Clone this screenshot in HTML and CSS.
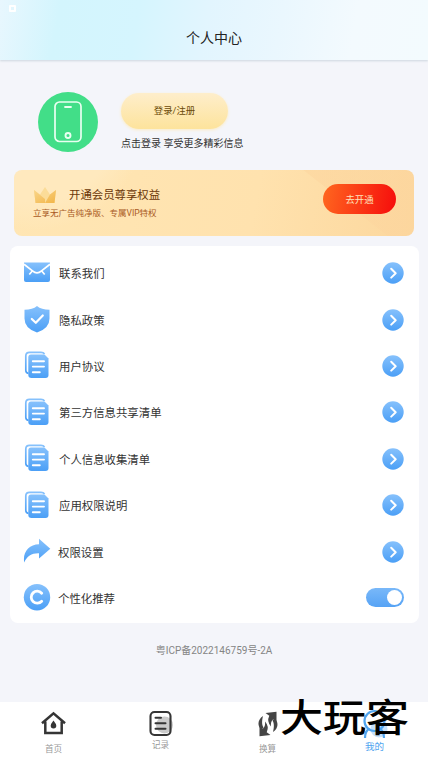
FILE: index.html
```html
<!DOCTYPE html>
<html lang="zh-CN">
<head>
<meta charset="utf-8">
<title>个人中心</title>
<link rel="stylesheet" href="styles.css">
</head>
<body>
<svg class="defs" width="0" height="0" aria-hidden="true">
  <defs>
    <linearGradient id="blue" x1="0" y1="0" x2="0" y2="1"><stop offset="0" stop-color="#86c1fc"/><stop offset="1" stop-color="#4b9ff6"/></linearGradient>
    <linearGradient id="gold" x1="0" y1="0" x2="1" y2="1"><stop offset="0" stop-color="#f9d58a"/><stop offset="1" stop-color="#f2b548"/></linearGradient>
    <symbol id="doc" viewBox="0 0 26 28">
      <path d="M4.500 22.500C2.600 22 1.800 21 1.800 19.500V5Q1.800 1.300 5.500 1.300H17Q19.500 1.300 20.500 3" fill="none" stroke="url(#blue)" stroke-width="1.700"/>
      <path d="M7 3.500H20.500L24.500 7.500V24Q24.500 27 21.500 27H7.500Q4.300 27 4.300 24V6.500Q4.300 3.500 7 3.500Z" fill="url(#blue)"/>
      <path d="M8.800 10.200H20M8.800 15.600H20M8.800 21.200H15.800" stroke="#fff" stroke-width="1.900" stroke-linecap="round"/>
    </symbol>
    <symbol id="go" viewBox="0 0 22 22">
      <circle cx="11" cy="11" r="10.700" fill="url(#blue)"/>
      <path d="M9.200 6.800L13.700 11.200L9.200 15.600" fill="none" stroke="#fff" stroke-width="2" stroke-linecap="round" stroke-linejoin="round"/>
    </symbol>
  </defs>
</svg>
<div class="app">
  <header class="header">
    <i class="status"></i>
    <h1>个人中心</h1>
  </header>
  <main class="main">
    <section class="profile">
      <div class="avatar">
        <svg width="28" height="42" viewBox="0 0 28 42" fill="none" stroke="#e9fff1">
          <rect x="1" y="1" width="26" height="39.500" rx="4.500" stroke-width="1.700"/>
          <path d="M11 6H17" stroke-width="1.800" stroke-linecap="round"/>
          <circle cx="14" cy="34.500" r="2.500" stroke-width="1.900"/>
        </svg>
      </div>
      <div class="login">
        <button class="login-btn">登录/注册</button>
        <p>点击登录 享受更多精彩信息</p>
      </div>
    </section>
    <section class="vip">
      <div class="vip-text">
        <div class="vip-title">
          <svg width="24" height="18" viewBox="0 0 24 18">
            <path d="M1 4L7 8.500L12 1L17 8.500L23 4L21.500 17H2.500Z" fill="#fbdc98"/>
            <path d="M1 4L12 13L12 17H2.500ZM17 8.500L23 4L21.500 17H12Z" fill="url(#gold)"/>
          </svg>
          <span>开通会员尊享权益</span>
        </div>
        <p>立享无广告纯净版、专属VIP特权</p>
      </div>
      <button class="vip-btn">去开通</button>
    </section>
    <ul class="menu">
      <li>
        <svg class="ico" viewBox="0 0 28 28"><path d="M1 3.500H27V21Q27 23 25 23H3Q1 23 1 21Z" fill="url(#blue)"/><path d="M1 5.300L9.500 11.800Q14 16 18.500 11.800L27 5.300M9.500 11.800L6.300 15.500M18.500 11.800L21.700 15.500" fill="none" stroke="#fff" stroke-width="1.700"/></svg>
        <span>联系我们</span><svg class="go"><use href="#go"/></svg>
      </li>
      <li>
        <svg class="ico" viewBox="0 0 28 28"><path d="M14 0C17 2.500 21 3.700 26.500 3.800V12.500Q26.500 22.500 14 26.500Q1.500 22.500 1.500 12.500V3.800C7 3.700 11 2.500 14 0Z" fill="url(#blue)"/><path d="M8.800 13L12.800 16.800L19.800 9.500" fill="none" stroke="#fff" stroke-width="2.200" stroke-linecap="round" stroke-linejoin="round"/></svg>
        <span>隐私政策</span><svg class="go"><use href="#go"/></svg>
      </li>
      <li><svg class="ico doc"><use href="#doc"/></svg><span>用户协议</span><svg class="go"><use href="#go"/></svg></li>
      <li><svg class="ico doc"><use href="#doc"/></svg><span>第三方信息共享清单</span><svg class="go"><use href="#go"/></svg></li>
      <li><svg class="ico doc"><use href="#doc"/></svg><span>个人信息收集清单</span><svg class="go"><use href="#go"/></svg></li>
      <li><svg class="ico doc"><use href="#doc"/></svg><span>应用权限说明</span><svg class="go"><use href="#go"/></svg></li>
      <li class="tight">
        <svg class="ico" viewBox="0 0 28 28"><path d="M16 .8L27.300 10.800L16 20.500V15.300C9 15 4 18 1.200 24.500C-.5 14 6 6.500 16 6.300Z" fill="url(#blue)"/></svg>
        <span>权限设置</span><svg class="go"><use href="#go"/></svg>
      </li>
      <li class="tight">
        <svg class="ico" viewBox="0 0 28 28"><circle cx="14" cy="13.200" r="13.200" fill="url(#blue)"/><path d="M18.700 9.200A6 6 0 1 0 18.700 17.200" fill="none" stroke="#fff" stroke-width="2.800" stroke-linecap="round"/></svg>
        <span>个性化推荐</span><i class="switch"></i>
      </li>
    </ul>
    <p class="record">粤ICP备2022146759号-2A</p>
  </main>
  <nav class="tabs">
    <a>
      <svg width="28" height="28" viewBox="0 0 28 28"><path d="M2 14.300L13.500 4.300L25 14.300M5.300 12.500V24H21.700V12.500" fill="none" stroke="#353535" stroke-width="2.500"/><path d="M13.500 11.500Q16.300 15 16.300 16.700A2.800 2.800 0 0 1 10.700 16.700Q10.700 15 13.500 11.500Z" fill="#353535"/></svg>
      <span>首页</span>
    </a>
    <a class="records">
      <svg width="28" height="28" viewBox="0 0 28 28"><circle cx="17.500" cy="16" r="8.500" fill="#cbcbcb"/><rect x="3.500" y="3" width="20" height="23" rx="4" fill="none" stroke="#353535" stroke-width="2.100"/><path d="M8.500 8.800H14M8.500 14.300H18.500M8.500 19.800H18.500" stroke="#353535" stroke-width="2" stroke-linecap="round"/></svg>
      <span>记录</span>
    </a>
    <a>
      <svg width="28" height="28" viewBox="0 0 28 28" fill="#454545">
        <path id="turn" d="M11.500 4L22.500 2.700V13L19.300 10.300Q16.300 12.500 17 17.500Q12.500 12.500 15.300 6.800Z"/>
        <path id="side" d="M9 7C3 11 3.500 17.500 7.500 20.500L9.500 18.500C7.500 15.500 8 11 9 7Z"/>
        <use href="#turn" transform="rotate(180 14 15)"/>
        <use href="#side" transform="rotate(180 14 15)"/>
      </svg>
      <span>换算</span>
    </a>
    <a class="active">
      <svg width="30" height="30" viewBox="0 0 30 30"><circle cx="19" cy="20" r="8.500" fill="#c5e0fb"/><circle cx="14.500" cy="12" r="10" fill="none" stroke="#50a4ef" stroke-width="2.200"/><path d="M5 29Q5 22 9.500 19.500M24 29Q24 22 19.500 19.500" fill="none" stroke="#50a4ef" stroke-width="2.200"/></svg>
      <span>我的</span>
    </a>
  </nav>
  <div class="brand">大玩客</div>
</div>
</body>
</html>
```

FILE: styles.css
```css
* { box-sizing: border-box; margin: 0; padding: 0; }
body { font-family: Roboto, "Noto Sans CJK SC", sans-serif; background: #f4f5fa; color: #333; }
.defs { position: absolute; }
.app { position: relative; display: flex; flex-direction: column; width: 428px; height: 760px; overflow: hidden; }
.header {
  position: relative;
  height: 60px;
  padding-top: 28px;
  background: linear-gradient(100deg, #e8f7fe 0, #d3f5fd 14%, #d5f5fe 32%, #e2f5fe 48%, #eaf7fe 65%, #f3fafe 82%, #f3fbfe 100%);
  box-shadow: 0 1px 2px #cdd6df;
}
.header h1 { font-size: 14px; line-height: 21px; font-weight: 400; text-align: center; color: #222; }
.status { position: absolute; left: 9px; top: 5px; width: 7px; height: 7px; border: 2px solid #fff; border-radius: 1px; }
.main { flex: 1; }
.profile { display: flex; gap: 23px; padding: 32px 0 0 38px; height: 110px; }
.avatar { display: flex; align-items: center; justify-content: center; width: 60px; height: 60px; border-radius: 50%; background: #42de88; }
.login-btn {
  display: block; width: 107px; height: 36px; margin-top: 1px; border: 0; border-radius: 18px;
  background: linear-gradient(#feeecb, #fde39c); box-shadow: 0 1px 3px #fcecc4;
  font: 9.4px/36px Roboto, "Noto Sans CJK SC", sans-serif; color: #6b4a08;
}
.login p { margin-top: 7px; font-size: 10px; line-height: 15px; white-space: nowrap; }
.vip {
  display: flex; justify-content: space-between; height: 66px; margin: 0 14px; padding: 14px 18px 0 19px; border-radius: 8px;
  background:
    linear-gradient(38deg, transparent 77%, #fcd59e88 77.3%),
    radial-gradient(circle at 22px -50px, #ffe9be 0 82px, transparent 110px),
    linear-gradient(100deg, #ffe6b4, #ffe2ae 60%, #fcd79d);
}
.vip-title { display: flex; align-items: center; gap: 12px; height: 22px; font-size: 11.4px; color: #6b3708; }
.vip-title span { padding-bottom: 3px; }
.vip-title svg { margin-top: -1px; }
.vip-text p { font-size: 8.5px; line-height: 14px; color: #a95a24; }
.vip-btn {
  width: 73px; height: 30px; border: 0; border-radius: 15px; background: linear-gradient(100deg, #ff671f, #f60c0c);
  font: 9.4px/31px Roboto, "Noto Sans CJK SC", sans-serif; color: #ffe2bd;
}
.menu { height: 377px; margin: 10px 9px 0 10px; padding: 4px 15px 0 13px; border-radius: 8px; background: #fff; list-style: none; }
.menu li { display: flex; align-items: center; height: 46.4px; font-size: 11.4px; }
.menu span { flex: 1; }
.ico { width: 28px; height: 28px; margin-right: 8px; }
.ico.doc { width: 26px; height: 28px; margin: -1px 9px 0 1px; }
.tight .ico { margin-right: 7px; }
.go { width: 22px; height: 22px; }
.switch { width: 38px; height: 19px; padding: 2px; border-radius: 10px; background: linear-gradient(#79b8f9, #56a3f5); }
.switch::after { content: ""; display: block; width: 15px; height: 15px; margin-left: auto; border-radius: 50%; background: #fff; }
.record { margin-top: 20px; font-size: 10px; line-height: 15px; text-align: center; color: #858585; }
.tabs { display: flex; height: 58px; background: #fff; }
.tabs a { flex: 1; display: flex; flex-direction: column; align-items: center; padding-top: 7px; font-size: 8.6px; line-height: 13px; color: #999; }
.tabs span { margin-top: 6px; }
.tabs .records span { margin-top: 2px; }
.tabs .active { font-size: 9.6px; color: #50a4ef; }
.tabs .active span { margin-top: 1px; }
.brand { position: absolute; left: 280px; top: 698px; font-size: 43px; line-height: 40px; font-weight: 500; white-space: nowrap; color: #000; transform: scaleY(.88); }
```
